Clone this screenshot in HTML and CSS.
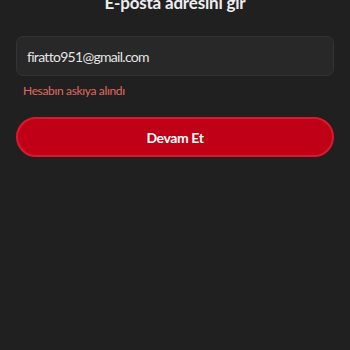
FILE: index.html
```html
<!DOCTYPE html>
<html lang="tr">
<head>
<meta charset="utf-8">
<link rel="stylesheet" href="styles.css">
</head>
<body>
<main class="page">
  <h1 class="title">E-posta adresini gir</h1>
  <div class="field">firatto951@gmail.com</div>
  <p class="error">Hesabın askıya alındı</p>
  <button class="btn">Devam Et</button>
</main>
</body>
</html>
```
FILE: styles.css
```css
html, body {
  margin: 0;
  padding: 0;
  background: #202020;
  height: 100%;
}
.page {
  font-family: Lato, "Open Sans", sans-serif;
  padding: 0 16px;
  display: flex;
  flex-direction: column;
}
.title {
  margin: -8px 0 0;
  font-size: 17px;
  line-height: 22px;
  font-weight: 700;
  color: #eeeeee;
  text-align: center;
  letter-spacing: -0.2px;
}
.field {
  margin-top: 22px;
  height: 40px;
  box-sizing: border-box;
  border: 1px solid #333333;
  border-radius: 7px;
  background: #282828;
  color: #e4e4e4;
  font-size: 14px;
  letter-spacing: -0.7px;
  display: flex;
  align-items: center;
  padding-left: 10px;
}
.error {
  margin: 7px 0 0 7px;
  color: #e06a62;
  font-size: 12px;
  line-height: 16px;
  letter-spacing: -0.35px;
}
.btn {
  margin-top: 18px;
  height: 40px;
  width: 100%;
  border: 2px solid #d81a2c;
  border-radius: 20px;
  background: #bf0016;
  color: #ffffff;
  font-family: inherit;
  font-size: 14px;
  font-weight: 700;
  letter-spacing: -0.4px;
}
```
